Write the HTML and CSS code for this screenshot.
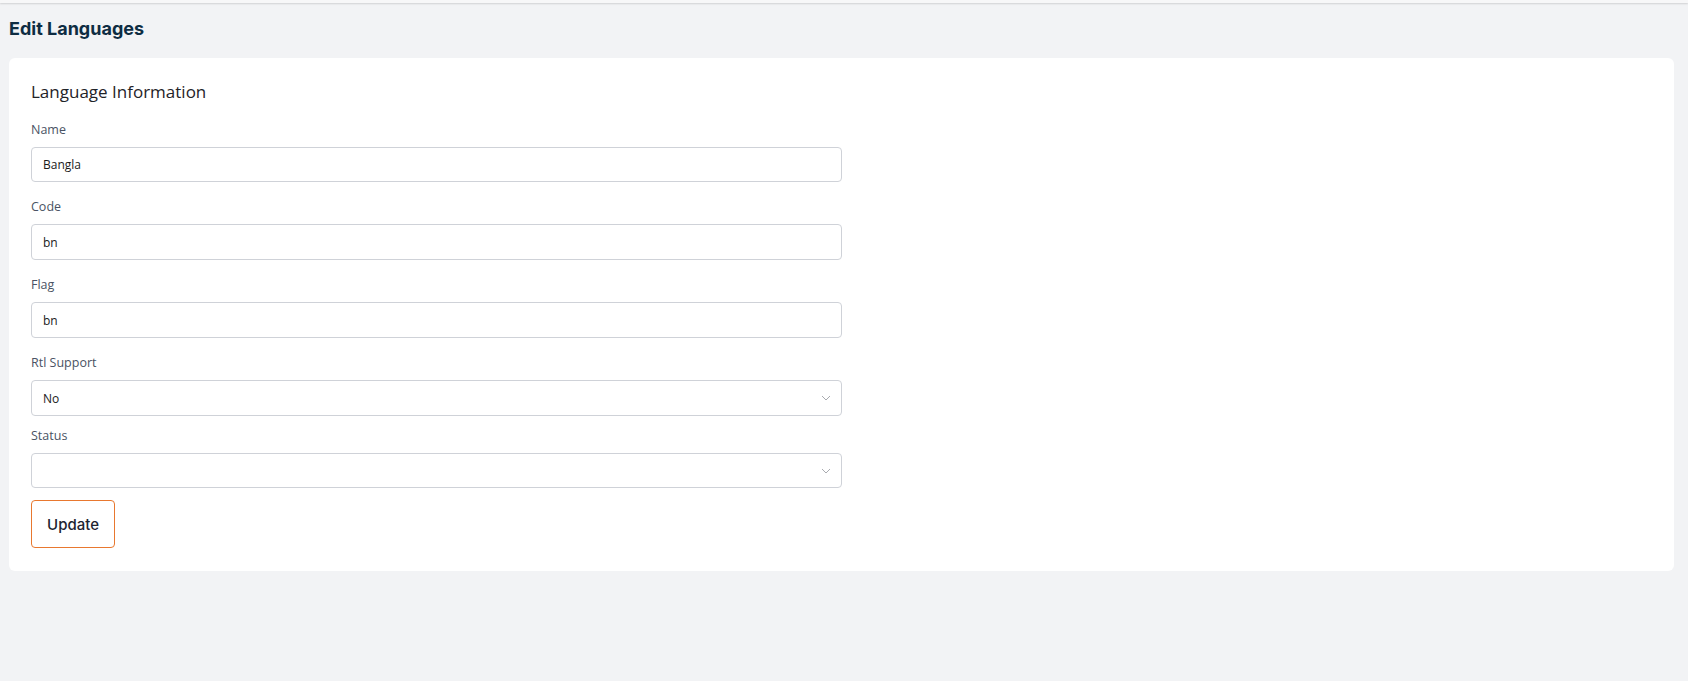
FILE: index.html
```html
<!DOCTYPE html>
<html lang="en">
<head>
<meta charset="utf-8">
<title>Edit Languages</title>
<link rel="stylesheet" href="styles.css">
</head>
<body>
<div class="topbar"></div>
<main class="page">
  <h1 class="page-title">Edit Languages</h1>
  <section class="card">
    <h2 class="card-title">Language Information</h2>
    <form class="form">
      <div class="group">
        <label class="label" for="name">Name</label>
        <input class="control" id="name" type="text" value="Bangla">
      </div>
      <div class="group">
        <label class="label" for="code">Code</label>
        <input class="control" id="code" type="text" value="bn">
      </div>
      <div class="group">
        <label class="label" for="flag">Flag</label>
        <input class="control" id="flag" type="text" value="bn">
      </div>
      <div class="group group-select">
        <label class="label" for="rtl">Rtl Support</label>
        <div class="select">
          <span class="select-value">No</span>
          <svg class="chevron" width="10" height="6" viewBox="0 0 10 6"><path d="M1 1 L5 5 L9 1" fill="none" stroke="#a9abb0" stroke-width="1"/></svg>
        </div>
      </div>
      <div class="group group-select">
        <label class="label" for="status">Status</label>
        <div class="select">
          <span class="select-value"></span>
          <svg class="chevron" width="10" height="6" viewBox="0 0 10 6"><path d="M1 1 L5 5 L9 1" fill="none" stroke="#a9abb0" stroke-width="1"/></svg>
        </div>
      </div>
      <button class="btn" type="button">Update</button>
    </form>
  </section>
</main>
</body>
</html>
```
FILE: styles.css
```css
* { box-sizing: border-box; }
html, body { margin: 0; padding: 0; }
body {
  background: #f2f3f5;
  font-family: "Open Sans", "Noto Sans", sans-serif;
  color: #212529;
  min-height: 681px;
}
.topbar {
  height: 3px;
  background: #f7f7f8;
  box-shadow: 0 1px 2px rgba(0,0,0,0.14);
}
.page {
  padding: 0 14px 0 9px;
}
.page-title {
  margin: 13.5px 0 17.5px;
  font-family: Inter, "Noto Sans", sans-serif;
  font-weight: 700;
  font-size: 18px;
  line-height: 24px;
  color: #0e2c42;
}
.card {
  background: #fff;
  border-radius: 6px;
  padding: 22px 22px 22.5px;
}
.card-title {
  margin: 0 0 16.5px;
  font-weight: 400;
  font-size: 17px;
  line-height: 24px;
  color: #1f2328;
}
.form {
  width: 50%;
}
.group {
  margin-bottom: 16.8px;
}
.group-select {
  margin-bottom: 11.5px;
}
.label {
  display: block;
  font-size: 12.5px;
  line-height: 18px;
  margin-bottom: 8px;
  color: #4a5364;
}
.control, .select {
  display: flex;
  align-items: center;
  width: 100%;
  height: 35.2px;
  border: 1px solid #cfd2d8;
  border-radius: 4px;
  background: #fff;
  padding: 0 11px;
  font-family: "Open Sans", "Noto Sans", sans-serif;
  font-size: 12px;
  color: #1a1a1a;
  outline: none;
}
.select {
  justify-content: space-between;
  padding-right: 10px;
}
.chevron { display: block; }
.btn {
  display: block;
  height: 48.5px;
  width: 84px;
  padding: 0;
  border: 1px solid #e8782f;
  border-radius: 4px;
  background: #fff;
  font-family: Inter, "Noto Sans", sans-serif;
  font-weight: 500;
  font-size: 15px;
  color: #1e2430;
  cursor: pointer;
}
```
